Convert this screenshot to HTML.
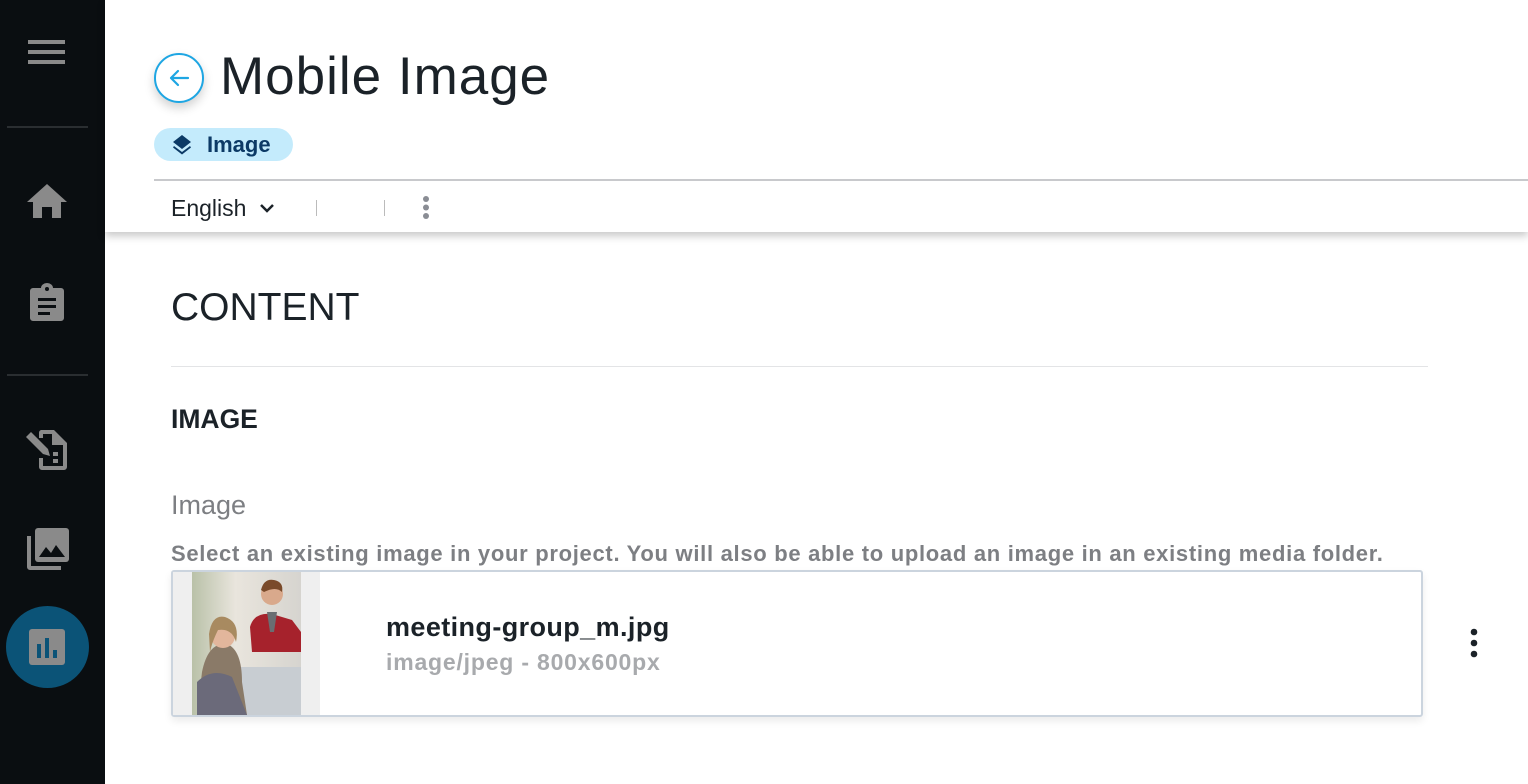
<!DOCTYPE html>
<html><head><meta charset="utf-8"><style>
*{margin:0;padding:0;box-sizing:border-box}
body{width:1528px;height:784px;overflow:hidden;background:#fff;font-family:"Liberation Sans",sans-serif;position:relative}
.side{position:absolute;left:0;top:0;width:105px;height:784px;background:#0a0e11}
.div{position:absolute;left:7px;width:81px;height:2px;background:#2a2e31}
.ab{position:absolute;white-space:nowrap}
.hdr{position:absolute;left:105px;top:0;width:1423px;height:232px;background:#fff;box-shadow:0 4px 8px rgba(0,0,0,.22)}
</style></head><body>
<div class="side">
 <svg class="ab" style="left:27px;top:38px" width="40" height="28"><rect x="1" y="2" width="37" height="4" fill="#8a8a8a"/><rect x="1" y="12" width="37" height="4" fill="#8a8a8a"/><rect x="1" y="22" width="37" height="4" fill="#8a8a8a"/></svg>
 <div class="div" style="top:126px"></div>
 <svg class="ab" style="left:26px;top:182px" width="42" height="38"><path d="M21 2 L41 20 L35 20 L35 36 L26 36 L26 25 L16 25 L16 36 L7 36 L7 20 L1 20Z" fill="#8a8a8a"/></svg>
 <svg class="ab" style="left:29px;top:282px" width="38" height="40"><path d="M4 6 H12 A6 5 0 0 1 24 6 H32 A3 3 0 0 1 35 9 V36 A3 3 0 0 1 32 39 H4 A3 3 0 0 1 1 36 V9 A3 3 0 0 1 4 6Z" fill="#8a8a8a"/><rect x="9" y="16" width="18" height="3" fill="#0a0e11"/><rect x="9" y="23" width="18" height="3" fill="#0a0e11"/><rect x="9" y="30" width="12" height="3" fill="#0a0e11"/><circle cx="18" cy="7" r="2" fill="#0a0e11"/></svg>
 <div class="div" style="top:374px"></div>
 <svg class="ab" style="left:24px;top:428px" width="44" height="44"><path d="M17 2 H30 L43 15 V39 A3 3 0 0 1 40 42 H18 A3 3 0 0 1 15 39 V30 L19 30 V38 H39 V17 H28 V6 H19 V10 L15 10 V5 A3 3 0 0 1 17 2Z" fill="#8a8a8a"/><path d="M2 9 L7 4 L24 21 L26 28 L19 26Z" fill="#8a8a8a"/><rect x="29" y="24" width="5" height="4" fill="#8a8a8a"/><rect x="29" y="31" width="5" height="4" fill="#8a8a8a"/></svg>
 <svg class="ab" style="left:25px;top:526px" width="46" height="46"><path d="M2 10 H6 V40 H36 V44 H5 A3 3 0 0 1 2 41Z" fill="#8a8a8a"/><rect x="10" y="2" width="34" height="34" rx="3" fill="#8a8a8a"/><path d="M14 31 L21 21 L26 27 L31 19 L40 31Z" fill="#0a0e11"/></svg>
 <div class="ab" style="left:6px;top:606px;width:83px;height:82px;border-radius:50%;background:#0b5377"></div>
 <svg class="ab" style="left:28px;top:628px" width="38" height="38"><rect x="1" y="1" width="36" height="36" rx="3" fill="#8a8a8a"/><rect x="9" y="16" width="4" height="14" fill="#0b5377"/><rect x="17" y="10" width="4" height="20" fill="#0b5377"/><rect x="25" y="22" width="4" height="8" fill="#0b5377"/></svg>
</div>
<div class="hdr"></div>
<div class="ab" style="left:154px;top:53px;width:50px;height:50px;border-radius:50%;background:#fff;border:2px solid #1ea6e3;box-shadow:0 5px 10px rgba(0,0,0,.18)"></div>
<svg class="ab" style="left:164px;top:63px" width="30" height="30"><path d="M24 15 H7 M14 8 L7 15 L14 22" stroke="#1ea6e3" stroke-width="2.2" fill="none" stroke-linecap="round" stroke-linejoin="round"/></svg>
<div class="ab" style="left:220px;top:46px;font-size:53px;color:#1b2228;font-weight:300;letter-spacing:1px">Mobile Image</div>
<div class="ab" style="left:154px;top:128px;width:139px;height:33px;border-radius:17px;background:#c4ebfc"></div>
<svg class="ab" style="left:172px;top:134px" width="22" height="22"><path d="M10 1 L19 8 L10 15 L1 8Z" fill="#0c3a66"/><path d="M2 12 L10 18 L18 12 L19 13.5 L10 20.5 L1 13.5Z" fill="#0c3a66"/></svg>
<div class="ab" style="left:207px;top:132px;font-size:22px;color:#0c3a66;font-weight:bold">Image</div>
<div class="ab" style="left:154px;top:179px;width:1374px;height:2px;background:#c8c9cc"></div>
<div class="ab" style="left:171px;top:195px;font-size:23px;color:#1b2228">English</div>
<svg class="ab" style="left:258px;top:201px" width="18" height="14"><path d="M3 4 L9 10 L15 4" stroke="#1b2228" stroke-width="2.5" fill="none"/></svg>
<div class="ab" style="left:316px;top:200px;width:1px;height:16px;background:#bbb"></div>
<div class="ab" style="left:384px;top:200px;width:1px;height:16px;background:#bbb"></div>
<svg class="ab" style="left:420px;top:195px" width="12" height="26"><circle cx="6" cy="4" r="3" fill="#8a8d94"/><circle cx="6" cy="12.5" r="3" fill="#8a8d94"/><circle cx="6" cy="21" r="3" fill="#8a8d94"/></svg>
<div class="ab" style="left:171px;top:286px;font-size:39px;color:#1b2228;font-weight:300">CONTENT</div>
<div class="ab" style="left:171px;top:366px;width:1257px;height:1px;background:#e3e4e6"></div>
<div class="ab" style="left:171px;top:404px;font-size:26.5px;color:#1b2228;font-weight:bold">IMAGE</div>
<div class="ab" style="left:171px;top:490px;font-size:27px;color:#7d7f83">Image</div>
<div class="ab" style="left:171px;top:541px;font-size:22px;color:#7d7f83;font-weight:bold;letter-spacing:0.7px">Select an existing image in your project. You will also be able to upload an image in an existing media folder.</div>
<div class="ab" style="left:171px;top:570px;width:1252px;height:147px;border:2px solid #cbd4de;border-radius:3px;box-shadow:0 4px 8px rgba(0,0,0,.08)"></div>
<div class="ab" style="left:173px;top:572px;width:147px;height:143px;background:#efefef"></div>
<svg class="ab" style="left:192px;top:572px" width="109" height="143">
<defs><linearGradient id="bg" x1="0" x2="1"><stop offset="0" stop-color="#b9c1a8"/><stop offset=".4" stop-color="#e9e5dd"/><stop offset="1" stop-color="#d6d4cf"/></linearGradient></defs>
<rect width="109" height="143" fill="url(#bg)"/>
<rect x="40" y="95" width="69" height="48" fill="#c8cdd2"/>
<path d="M58 55 Q62 40 80 42 L100 48 L109 60 L109 80 L60 80Z" fill="#a6222c"/>
<circle cx="80" cy="22" r="11" fill="#d9a98c"/>
<path d="M69 18 Q72 6 82 8 Q92 10 90 20 Q84 14 72 20Z" fill="#7a4a2a"/>
<path d="M75 40 L85 40 L82 60 L78 60Z" fill="#6a6e72"/>
<path d="M10 100 Q16 70 35 72 Q50 78 50 110 L55 143 L5 143Z" fill="#8a7a68"/>
<circle cx="31" cy="64" r="12" fill="#e2b69c"/>
<path d="M17 62 Q20 42 33 45 Q48 50 44 70 Q40 56 26 58 Q20 70 18 80Z" fill="#a88a60"/>
<path d="M5 110 Q20 95 40 105 L55 143 L5 143Z" fill="#6b6a7a"/>
</svg>
<div class="ab" style="left:386px;top:612px;font-size:27px;color:#1b2228;font-weight:bold;letter-spacing:0.4px">meeting-group_m.jpg</div>
<div class="ab" style="left:386px;top:649px;font-size:23px;color:#a8aaad;font-weight:bold;letter-spacing:0.8px">image/jpeg - 800x600px</div>
<svg class="ab" style="left:1468px;top:628px" width="12" height="32"><circle cx="6" cy="4" r="3.3" fill="#1b2228"/><circle cx="6" cy="15" r="3.3" fill="#1b2228"/><circle cx="6" cy="26" r="3.3" fill="#1b2228"/></svg>
</body></html>
